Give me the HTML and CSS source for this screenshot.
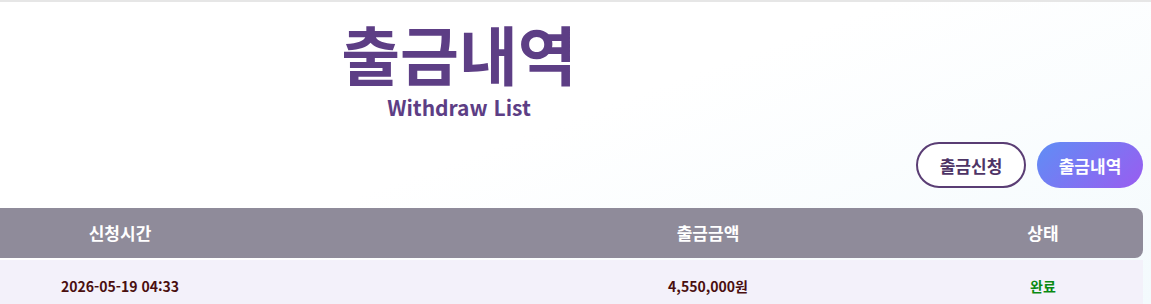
FILE: index.html
```html
<!DOCTYPE html>
<html lang="ko">
<head>
  <meta charset="UTF-8">
  <meta name="viewport" content="width=device-width, initial-scale=1.0">
  <title>출금내역</title>
  <link rel="stylesheet" href="styles.css">
</head>
<body>
  <div class="page">
    <div class="title-box">
      <h1>출금내역</h1>
      <p class="sub">Withdraw List</p>
    </div>

    <div class="tabs">
      <a href="#" class="tab outline">출금신청</a>
      <a href="#" class="tab active">출금내역</a>
    </div>

    <div class="list">
      <div class="list-head">
        <div>신청시간</div>
        <div>출금금액</div>
        <div>상태</div>
      </div>
      <div class="list-row">
        <div>2026-05-19 04:33</div>
        <div>4,550,000원</div>
        <div class="done">완료</div>
      </div>
    </div>
  </div>
</body>
</html>
```

FILE: styles.css
```css
body {
  margin: 0;
  padding: 0;
  font-family: "Noto Sans CJK KR", "Noto Sans", sans-serif;
  background: linear-gradient(160deg, #ffffff 0%, #ffffff 45%, #f3fafd 100%);
  border-top: 2px solid #e6e6e6;
  overflow: hidden;
}

.page {
  width: 1143px;
  height: 302px;
}

.title-box {
  width: 918px;
  text-align: center;
  padding-top: 10px;
}

h1 {
  margin: 0;
  font-size: 64px;
  line-height: 80px;
  font-weight: 700;
  color: #5d3e85;
}

.sub {
  margin: 2px 0 0;
  font-size: 21px;
  line-height: 26px;
  font-weight: 700;
  color: #5d3e85;
}

.tabs {
  display: flex;
  justify-content: flex-end;
  gap: 11px;
  margin-top: 22px;
}

.tab {
  display: flex;
  align-items: center;
  justify-content: center;
  height: 46px;
  border-radius: 23px;
  font-size: 17px;
  font-weight: 700;
  text-decoration: none;
  box-sizing: border-box;
}

.tab.outline {
  width: 110px;
  border: 2px solid #5a3d74;
  color: #4e3466;
  background-color: #fff;
}

.tab.active {
  width: 106px;
  color: #fff;
  background: linear-gradient(135deg, #5f8ef5 0%, #9a5cf0 100%);
}

.list {
  margin-top: 20px;
  margin-left: -233px;
}

.list-head, .list-row {
  display: grid;
  grid-template-columns: 706px 470px 200px;
  text-align: center;
  font-weight: 700;
}

.list-head {
  height: 50px;
  line-height: 50px;
  background-color: #8f8b9a;
  color: #fff;
  font-size: 17px;
  border-radius: 0 8px 8px 0;
}

.list-row {
  margin-top: 2px;
  height: 48px;
  line-height: 52px;
  background-color: #f3f1fa;
  color: #4a0f0f;
  font-size: 14px;
}

.list-row .done {
  color: #0a8a12;
}
```
